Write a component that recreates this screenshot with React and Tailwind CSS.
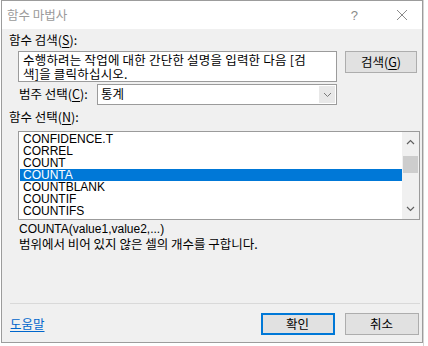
import React from "react";

const KR = { fontFamily: '"Noto Sans CJK KR", "Noto Sans", sans-serif' };
const AR = { fontFamily: '"Liberation Sans", Arial, sans-serif' };

function U({ children }) {
  return <span className="underline underline-offset-2">{children}</span>;
}

export default function App() {
  const items = ["CONFIDENCE.T", "CORREL", "COUNT", "COUNTA", "COUNTBLANK", "COUNTIF", "COUNTIFS"];
  return (
    <div className="w-[428px] h-[346px] bg-white overflow-hidden relative" style={KR}>
      <div className="absolute left-[423px] top-0 w-px h-full bg-[#d4d4d4]" />
      <div className="ml-[1px] w-[422px] h-[343px] border border-[#9c9c9c] bg-[#f0f0f0] flex flex-col text-[12px] text-black leading-none">
        {/* title bar */}
        <div className="h-[28px] bg-white flex items-center shrink-0">
          <span className="ml-[5px] text-[#9a9a9a] text-[12.5px]">함수 마법사</span>
          <span className="ml-auto mr-[38px] text-[#8a8a8a] text-[13px]" style={AR}>?</span>
          <svg width="12" height="12" viewBox="0 0 12 12" className="mr-[14px]">
            <path d="M1 1 L11 11 M11 1 L1 11" stroke="#8a8a8a" strokeWidth="1" />
          </svg>
        </div>
        <div className="flex-1 flex flex-col pl-[7px]">
          <div className="mt-[3px] h-[16px] flex items-center text-[12.5px]">함수 검색(<U>S</U>):</div>
          <div className="mt-[3px] flex">
            <div className="ml-[9px] w-[319px] h-[31px] bg-white border border-[#9b9b9b] pl-[4px] pt-[1px] text-[12.5px] leading-[14px] tracking-[0.2px] overflow-hidden">
              <div className="h-[14px] whitespace-nowrap">수행하려는 작업에 대한 간단한 설명을 입력한 다음 [검</div>
              <div className="h-[14px] whitespace-nowrap">색]을 클릭하십시오.</div>
            </div>
            <button className="ml-[8px] w-[72px] h-[22px] bg-[#e1e1e1] border border-[#adadad] flex items-center justify-center text-[12.5px]">
              검색(<U>G</U>)
            </button>
          </div>
          <div className="mt-[2px] flex items-center h-[21px]">
            <span className="ml-[10px] w-[78px] text-[12.5px]">범주 선택(<U>C</U>):</span>
            <div className="w-[240px] h-[21px] bg-white border border-[#9b9b9b] flex items-center">
              <span className="ml-[3px] text-[12.5px]">통계</span>
              <div className="ml-auto w-[16px] h-[17px] mr-[1px] bg-[#e8e8e8] flex items-center justify-center">
                <svg width="9" height="6" viewBox="0 0 9 6">
                  <path d="M1 1 L4.5 4.5 L8 1" stroke="#7a7a7a" strokeWidth="1" fill="none" />
                </svg>
              </div>
            </div>
          </div>
          <div className="mt-[4px] h-[16px] flex items-center text-[12.5px]">함수 선택(<U>N</U>):</div>
          <div className="mt-[6px] ml-[9px] w-[402px] h-[89px] bg-white border border-[#9b9b9b] flex overflow-hidden" style={AR}>
            <div className="flex-1 pt-[1px] pl-[1px]">
              {items.map((it) => (
                <div
                  key={it}
                  className={
                    "h-[12px] pl-[3px] flex items-center text-[12px] leading-[12px] " +
                    (it === "COUNTA" ? "bg-[#0078d7] text-white" : "")
                  }
                >
                  {it}
                </div>
              ))}
            </div>
            <div className="w-[17px] bg-[#f0f0f0] flex flex-col items-center">
              <div className="h-[20px] flex items-center justify-center">
                <svg width="9" height="6" viewBox="0 0 9 6">
                  <path d="M1 5 L4.5 1.5 L8 5" stroke="#606060" strokeWidth="1.2" fill="none" />
                </svg>
              </div>
              <div className="mt-[4px] w-[15px] h-[17px] bg-[#cdcdcd]" />
              <div className="mt-auto h-[20px] flex items-center justify-center">
                <svg width="9" height="6" viewBox="0 0 9 6">
                  <path d="M1 1 L4.5 4.5 L8 1" stroke="#606060" strokeWidth="1.2" fill="none" />
                </svg>
              </div>
            </div>
          </div>
          <div className="mt-[1px] ml-[10px] h-[15px] flex items-center text-[12px]" style={AR}>
            COUNTA(value1,value2,...)
          </div>
          <div className="ml-[10px] h-[16px] flex items-center text-[12.5px]">
            범위에서 비어 있지 않은 셀의 개수를 구합니다.
          </div>
          <div className="mt-[51px] ml-[1px] w-[410px] h-px bg-[#d9d9d9]" />
          <div className="mt-[9px] flex items-center">
            <span className="ml-[1px] text-[#0066cc] underline underline-offset-2 text-[12.5px]">도움말</span>
            <button className="ml-[216px] w-[74px] h-[22px] bg-[#e1e1e1] border-2 border-[#0078d7] flex items-center justify-center text-[12.5px]">
              확인
            </button>
            <button className="ml-[10px] w-[74px] h-[22px] bg-[#e1e1e1] border border-[#adadad] flex items-center justify-center text-[12.5px]">
              취소
            </button>
          </div>
        </div>
      </div>
    </div>
  );
}
